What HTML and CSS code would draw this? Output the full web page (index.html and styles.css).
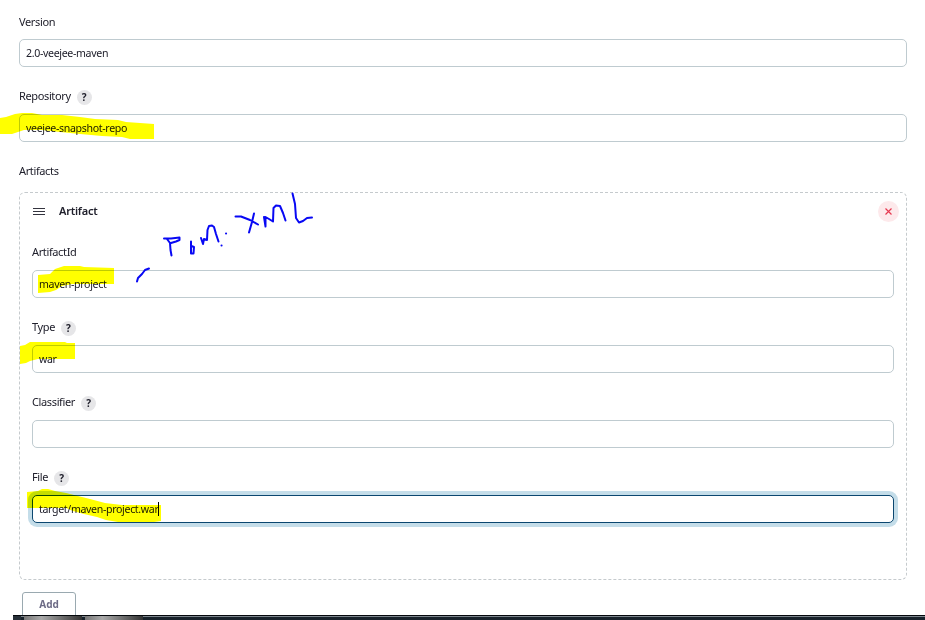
FILE: index.html
```html
<!DOCTYPE html>
<html lang="en">
<head>
<meta charset="utf-8">
<title>Nexus artifact upload</title>
<link rel="stylesheet" href="styles.css">
</head>
<body>
<main class="form">
  <div class="field">
    <div class="label low"><span>Version</span></div>
    <div class="input"><span>2.0-veejee-maven</span></div>
  </div>
  <div class="field">
    <div class="label"><span>Repository</span><span class="help">?</span></div>
    <div class="input"><span>veejee-snapshot-repo</span></div>
  </div>
  <div class="label section-label"><span>Artifacts</span></div>
  <section class="artifact">
    <header class="artifact-head">
      <svg class="handle" width="12" height="8" viewBox="0 0 12 8"><path d="M0 1.500H12M0 4.500H12M0 7.500H12" stroke="#34343f" stroke-width="1"/></svg>
      <strong>Artifact</strong>
      <span class="remove"><svg width="7" height="7" viewBox="0 0 7 7"><path d="M.5 .5L6.500 6.500M6.500 .5L.5 6.500" stroke="#e63950" stroke-width="1.200"/></svg></span>
    </header>
    <div class="field">
      <div class="label"><span>ArtifactId</span></div>
      <div class="input"><span>maven-project</span></div>
    </div>
    <div class="field">
      <div class="label"><span>Type</span><span class="help">?</span></div>
      <div class="input"><span>war</span></div>
    </div>
    <div class="field">
      <div class="label"><span>Classifier</span><span class="help">?</span></div>
      <div class="input"></div>
    </div>
    <div class="field">
      <div class="label"><span>File</span><span class="help">?</span></div>
      <div class="input focused"><span>target/maven-project.war</span><i class="caret"></i></div>
    </div>
  </section>
  <div class="add">Add</div>
</main>
<footer class="taskbar"><i class="task-start"></i><i class="task"></i><i class="task"></i></footer>
<svg class="overlay marker" width="925" height="620" viewBox="0 0 925 620" fill="#ff0">
  <path d="M0 118L6 117L15 114L22 113H32L42 115L62 115L80 117L95 119L118 120L126 122L154 124V139L130 139L122 137L102 136L80 134L60 132L42 130L24 130L18 132L12 134H0Z"/>
  <path d="M38 275L50 274L55 269L64 266H80L84 267L114 268V284H72L62 286L56 290L50 292L38 293Z"/>
  <path d="M20 346L25 345L30 342H65L67 343H75V359H38L30 361L26 363L20 364Z"/>
  <path d="M27 492L38 491L42 489H48L55 491L66 493L78 496L90 499L105 503L122 505H161V521L154 522H118L106 520L97 517L84 514L73 511L66 508H27Z"/>
</svg>
<svg class="overlay" width="925" height="620" viewBox="0 0 925 620" fill="none" stroke="#0808f4" stroke-width="2" stroke-linecap="round" stroke-linejoin="round">
  <path d="M137 281.500L138 278L142 274L145 270L149 268.500"/>
  <path d="M164 238.500H171L179.500 237.500V240L176 241.500L171 243M167 239L170 243L170.500 250L171.500 255.500"/>
  <path d="M191 241.500V253.500H193.500L194 247L191.500 246"/>
  <path d="M201 238L203 244L204 239L207 240L207.500 230L209 226L212 225.500L214 227L216 234L218.500 241.500M221.500 245.500h.1M226 233.500h.1"/>
  <path d="M235.500 216.500H241L250 220L258 224.500M254 213.500L252 222L249 232.500"/>
  <path d="M264 217L265.500 226.500V217L269 219L273 221.500L273.500 208L276 205.500L280 206L283 213L285.500 220.500"/>
  <path d="M292.500 193.500L295 204L296 218L299 222.500L303 221L307 218L312 217.500"/>
</svg>
</body>
</html>
```

FILE: styles.css
```css
* { box-sizing: border-box; }
body {
  margin: 0;
  height: 620px;
  overflow: hidden;
  position: relative;
  display: flex;
  flex-direction: column;
  background: #fff;
  color: #20202c;
  font: 11px/20px "Noto Sans", sans-serif;
  letter-spacing: -0.37px;
}
.form { height: 615px; flex: none; overflow: hidden; padding: 12px 18px 0 19px; }
.field { margin-bottom: 20px; }
.label { display: flex; align-items: center; height: 20px; margin-bottom: 7px; }
.label > span:first-child { position: relative; top: -1px; }
.label.low > span:first-child { top: 0; }
.section-label { margin-bottom: 10px; }
.help {
  width: 15px;
  height: 15px;
  margin-left: 6px;
  border-radius: 50%;
  background: #e6e6e8;
  font-size: 10px;
  font-weight: 700;
  line-height: 15px;
  text-align: center;
  letter-spacing: 0;
}
.input {
  display: flex;
  align-items: center;
  height: 28px;
  padding: 0 6px;
  border: 1px solid #bfcbd0;
  border-radius: 5px;
  background: #fff;
  font-size: 10.6px;
  letter-spacing: -0.34px;
}
.focused { border-color: #0b4770; box-shadow: 0 0 0 4px #c4dde9; }
.caret { width: 1px; height: 14px; background: #000; }
.artifact {
  height: 388px;
  padding: 8px 12px 0;
  border: 1px dashed #c5cacd;
  border-radius: 6px;
}
.artifact-head { display: flex; align-items: center; height: 20px; margin-bottom: 22px; }
.artifact-head strong { margin-left: 14px; font-weight: 600; letter-spacing: -0.22px; }
.handle { margin-left: 1px; }
.remove {
  display: grid;
  place-items: center;
  width: 21px;
  height: 21px;
  margin: 0 -5px 0 auto;
  border-radius: 50%;
  background: #fde9eb;
}
.add {
  width: 54px;
  height: 28px;
  margin: 12px 0 0 3px;
  border: 1px solid #9aa9b0;
  border-radius: 3px;
  color: #6d6b86;
  font-size: 10px;
  font-weight: 700;
  line-height: 23px;
  text-align: center;
  letter-spacing: -0.1px;
}
.taskbar {
  display: flex;
  gap: 3px;
  flex: none;
  height: 5px;
  margin-left: 13px;
  border-top: 1px solid #05080c;
  background: linear-gradient(#7d868d 0 1px, #18222b 1px);
}
.task-start { width: 8px; background: #273038; }
.task { width: 58px; background: linear-gradient(90deg, #777, #aaa 30%, #333); }
.overlay { position: absolute; top: 0; left: 0; pointer-events: none; }
.marker { mix-blend-mode: multiply; }
```
